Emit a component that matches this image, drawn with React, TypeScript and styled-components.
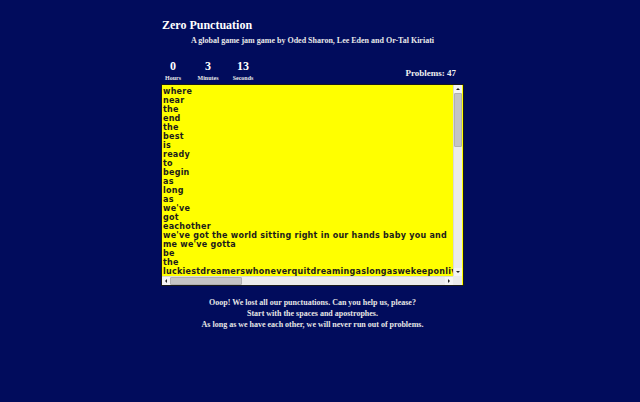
import React from "react";
import styled, { createGlobalStyle } from "styled-components";

const Global = createGlobalStyle`
  html, body { margin: 0; padding: 0; background: #010c5c; }
  body { font-family: "Liberation Serif", "Times New Roman", serif; color: #ffffff; }
`;

const Page = styled.div`
  width: 640px;
  height: 402px;
  background: #010c5c;
  padding: 17px 0 0 161px;
  box-sizing: border-box;
`;

const Column = styled.div`
  width: 303px;
  display: flex;
  flex-direction: column;
`;

const Title = styled.h1`
  margin: 0;
  padding-left: 1px;
  font-size: 12px;
  line-height: 16px;
  font-weight: bold;
  color: #ffffff;
`;

const Subtitle = styled.div`
  margin-top: 3px;
  text-align: center;
  font-size: 8px;
  line-height: 10px;
  font-weight: bold;
  color: #e8e8e8;
`;

const StatsRow = styled.div`
  margin-top: 11px;
  display: flex;
  align-items: flex-end;
  justify-content: space-between;
  height: 25px;
`;

const Timer = styled.div`
  display: flex;
`;

const Unit = styled.div<{ $w: number }>`
  width: ${(p) => p.$w}px;
  display: flex;
  flex-direction: column;
  align-items: center;
`;

const Num = styled.div`
  font-size: 12px;
  line-height: 14px;
  font-weight: bold;
  color: #ffffff;
`;

const Label = styled.div`
  margin-top: 1px;
  font-size: 6px;
  line-height: 8px;
  font-weight: bold;
  color: #e8e8e8;
`;

const Problems = styled.div`
  font-size: 9px;
  line-height: 10px;
  font-weight: bold;
  color: #f0f0f0;
  margin-bottom: 4px;
  margin-right: 8px;
`;

const Box = styled.div`
  margin-top: 2px;
  border: 1px solid #1a1a1a;
  display: grid;
  grid-template-columns: 291px 9px;
  grid-template-rows: 191px 9px;
  background: #ffff00;
`;

const Text = styled.div`
  overflow: hidden;
  white-space: pre;
  font-family: "DejaVu Sans", Verdana, sans-serif;
  font-weight: bold;
  font-size: 8px;
  line-height: 9px;
  letter-spacing: 0.25px;
  color: #1c1c1c;
  padding: 2px 0 0 1px;
  background: #ffff00;
`;

const VTrack = styled.div`
  background: #ebebeb;
  display: flex;
  flex-direction: column;
  border-left: 1px solid #d8d8d8;
`;

const HTrack = styled.div`
  background: #ebebeb;
  display: flex;
  border-top: 1px solid #d8d8d8;
`;

const Arrow = styled.div`
  width: 8px;
  height: 8px;
  flex: none;
  background: #f4f4f4;
  display: flex;
  align-items: center;
  justify-content: center;
`;

const Thumb = styled.div<{ $size: number; $vertical?: boolean }>`
  flex: none;
  ${(p) => (p.$vertical ? `height: ${p.$size}px; width: 8px;` : `width: ${p.$size}px; height: 8px;`)}
  background: #c4c4c4;
  border: 1px solid #b0b0b0;
  box-sizing: border-box;
  border-radius: 1px;
`;

const Spacer = styled.div`
  flex: 1;
`;

const Corner = styled.div`
  background: #ebebeb;
`;

const Footer = styled.div`
  margin-top: 11px;
  text-align: center;
  font-size: 8px;
  line-height: 11px;
  font-weight: bold;
  color: #e6e6e6;
`;

const Tri = ({ dir }: { dir: "up" | "down" | "left" | "right" }) => {
  const pts = {
    up: "1,4 5,4 3,2",
    down: "1,2 5,2 3,4",
    left: "4,1 4,5 2,3",
    right: "2,1 2,5 4,3",
  }[dir];
  return (
    <svg width="6" height="6" viewBox="0 0 6 6">
      <polygon points={pts} fill="#222" />
    </svg>
  );
};

const lines = [
  "where",
  "near",
  "the",
  "end",
  "the",
  "best",
  "is",
  "ready",
  "to",
  "begin",
  "as",
  "long",
  "as",
  "we've",
  "got",
  "eachother",
  "we've got the world sitting right in our hands baby you and",
  "me we've gotta",
  "be",
  "the",
  "luckiestdreamerswhoneverquitdreamingaslongaswekeeponliving",
];

export default function App() {
  return (
    <>
      <Global />
      <Page>
        <Column>
          <Title>Zero Punctuation</Title>
          <Subtitle>A global game jam game by Oded Sharon, Lee Eden and Or-Tal Kiriati</Subtitle>
          <StatsRow>
            <Timer>
              <Unit $w={24}>
                <Num>0</Num>
                <Label>Hours</Label>
              </Unit>
              <Unit $w={46}>
                <Num>3</Num>
                <Label>Minutes</Label>
              </Unit>
              <Unit $w={24}>
                <Num>13</Num>
                <Label>Seconds</Label>
              </Unit>
            </Timer>
            <Problems>Problems: 47</Problems>
          </StatsRow>
          <Box>
            <Text>{lines.join("\n")}</Text>
            <VTrack>
              <Arrow>
                <Tri dir="up" />
              </Arrow>
              <Thumb $vertical $size={54} />
              <Spacer />
              <Arrow>
                <Tri dir="down" />
              </Arrow>
            </VTrack>
            <HTrack>
              <Arrow>
                <Tri dir="left" />
              </Arrow>
              <Thumb $size={72} />
              <Spacer />
              <Arrow>
                <Tri dir="right" />
              </Arrow>
            </HTrack>
            <Corner />
          </Box>
          <Footer>
            Ooop! We lost all our punctuations. Can you help us, please?
            <br />
            Start with the spaces and apostrophes.
            <br />
            As long as we have each other, we will never run out of problems.
          </Footer>
        </Column>
      </Page>
    </>
  );
}
